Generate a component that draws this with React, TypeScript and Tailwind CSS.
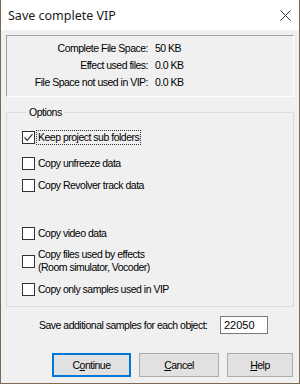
import React from "react";

const stats = [
  { label: "Complete File Space:", value: "50 KB" },
  { label: "Effect used files:", value: "0.0 KB" },
  { label: "File Space not used in VIP:", value: "0.0 KB" },
];

function CheckBox({ checked = false }: { checked?: boolean }) {
  return (
    <span className="w-[13px] h-[13px] shrink-0 border border-[#333333] bg-white flex items-center justify-center">
      {checked && (
        <svg width="11" height="11" viewBox="0 0 11 11">
          <path d="M1.5 5.5 L4.2 8.3 L9.5 2.2" fill="none" stroke="#333333" strokeWidth="1.2" />
        </svg>
      )}
    </span>
  );
}

function Btn({ children, primary = false, w }: { children: React.ReactNode; primary?: boolean; w: string }) {
  return (
    <button
      className={`${w} h-[24px] bg-[#e1e1e1] flex items-center justify-center text-black ${
        primary ? "border-2 border-[#0078d7]" : "border border-[#adadad]"
      }`}
    >
      {children}
    </button>
  );
}

export default function App() {
  return (
    <div
      className="w-[300px] h-[384px] bg-[#f0f0f0] border-l border-r border-b border-[#7a6a55] flex flex-col text-[10.5px] tracking-[-0.5px] text-black leading-[13px] whitespace-nowrap overflow-hidden"
      style={{ fontFamily: '"Liberation Sans", Arial, sans-serif' }}
    >
      {/* title bar */}
      <div className="h-[30px] bg-white flex items-center justify-between pl-[7px] pr-[8px] shrink-0">
        <span
          className="text-[12.5px] tracking-normal text-[#1a1a1a]"
          style={{ fontFamily: '"Noto Sans", "Liberation Sans", sans-serif' }}
        >
          Save complete VIP
        </span>
        <svg width="11" height="11" viewBox="0 0 11 11">
          <path d="M0.5 0.5 L10.5 10.5 M10.5 0.5 L0.5 10.5" stroke="#333333" strokeWidth="1" />
        </svg>
      </div>

      <div className="px-[5px] flex flex-col">
        {/* space info */}
        <div className="mt-[5px] h-[62px] border-t border-l border-[#a0a0a0] border-b-white border-r-white border-b border-r pt-[4px]">
          {stats.map((s) => (
            <div key={s.label} className="flex h-[17px] items-center">
              <span className="w-[141px] text-right">{s.label}</span>
              <span className="ml-[7px]">{s.value}</span>
            </div>
          ))}
        </div>

        {/* options */}
        <fieldset className="mt-[8px] border border-[#dcdcdc] h-[202px] pl-[15px]">
          <legend className="ml-[5px] px-[2px] leading-[14px]">Options</legend>
          <div className="flex flex-col">
            <label className="flex items-center h-[16px] mt-[10px]">
              <CheckBox checked />
              <span className="ml-[1px] px-[1px] border border-dotted border-[#333333] leading-[13px]">
                Keep project sub folders
              </span>
            </label>
            <label className="flex items-center h-[16px] mt-[10px]">
              <CheckBox />
              <span className="ml-[3px]">Copy unfreeze data</span>
            </label>
            <label className="flex items-center h-[16px] mt-[6px]">
              <CheckBox />
              <span className="ml-[3px]">Copy Revolver track data</span>
            </label>
            <label className="flex items-center h-[16px] mt-[32px]">
              <CheckBox />
              <span className="ml-[3px]">Copy video data</span>
            </label>
            <label className="flex items-center h-[26px] mt-[7px]">
              <CheckBox />
              <span className="ml-[3px]">
                Copy files used by effects
                <br />
                (Room simulator, Vocoder)
              </span>
            </label>
            <label className="flex items-center h-[16px] mt-[7px]">
              <CheckBox />
              <span className="ml-[3px]">Copy only samples used in VIP</span>
            </label>
          </div>
        </fieldset>

        {/* samples */}
        <div className="flex items-center mt-[9px] pl-[33px]">
          <span>Save additional samples for each object:</span>
          <div className="ml-auto mr-[26px] w-[48px] h-[18px] bg-white border border-[#7a7a7a] flex items-center pl-[3px] text-[11px] tracking-normal">
            22050
          </div>
        </div>

        {/* buttons */}
        <div className="flex mt-[19px] pl-[46px] gap-[8px]">
          <Btn primary w="w-[79px]">
            <span>
              C<span className="underline">o</span>ntinue
            </span>
          </Btn>
          <Btn w="w-[80px]">
            <span>
              <span className="underline">C</span>ancel
            </span>
          </Btn>
          <Btn w="w-[66px]">
            <span>
              <span className="underline">H</span>elp
            </span>
          </Btn>
        </div>
      </div>
    </div>
  );
}
